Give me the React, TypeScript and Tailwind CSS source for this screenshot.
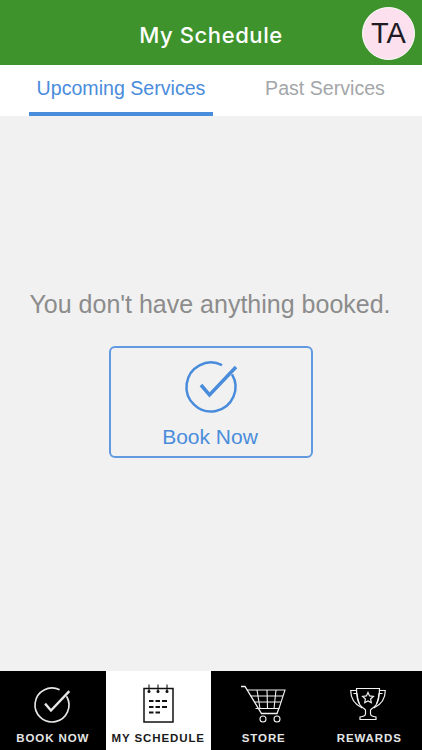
import React from 'react';

const CheckCircle = ({ className = '', size = 52, strokeWidth = 2.5 }: { className?: string; size?: number; strokeWidth?: number }) => (
  <svg width={size} height={size} viewBox="0 0 52 52" fill="none" stroke="currentColor" strokeWidth={strokeWidth} className={`block overflow-visible ${className}`}>
    <path d="M37 4.100A24.500 24.500 0 1 0 47 13.400" />
    <path d="M16 24l8.500 10L51 6" strokeWidth={strokeWidth + 1} />
  </svg>
);

const CalendarIcon = () => (
  <svg width="31" height="39" viewBox="0 0 31 39" fill="none" stroke="#111" className="block mt-[13px]">
    <rect x="1" y="4.500" width="29" height="33.500" strokeWidth="1.500" />
    <path d="M6 0.500v7M15 0.500v7M24 0.500v7" strokeWidth="1.100" />
    <circle cx="6" cy="7.500" r="1.500" fill="#111" stroke="none" />
    <circle cx="15" cy="7.500" r="1.500" fill="#111" stroke="none" />
    <circle cx="24" cy="7.500" r="1.500" fill="#111" stroke="none" />
    <path d="M6 17h4.500M12.500 17h4.500M19 17h5M6 23h4.500M12.500 23h4.500M19 23h5M6 28.500h4.500M12.500 28.500h4.500" strokeWidth="1.800" />
  </svg>
);

const CartIcon = () => (
  <svg width="45" height="38" viewBox="0 0 45 38" fill="none" stroke="#f2f2f2" strokeWidth="1.100" className="block mt-[14px]">
    <path d="M0 1.500h4L20.500 28.500H36l2-5.500" strokeWidth="1.300" />
    <path d="M6 5H44L38 23.500H14.500" />
    <path d="M9.500 11H42M13 17h27" />
    <path d="M16 5l3 18.500M26 5l.5 18.500M35 5l-2 18.500" />
    <circle cx="22" cy="34" r="3" />
    <circle cx="36" cy="34" r="3" />
  </svg>
);

const TrophyIcon = () => (
  <svg width="36" height="34" viewBox="0 0 36 34" fill="none" stroke="#f2f2f2" strokeWidth="1.200" className="block mt-[16px] mr-[2px]">
    <path d="M6.500 1.500h23c0 8-1 13-3.500 16.500-2 2.800-4.500 3.500-5.500 5v4c0 1.500 2.500 2.500 5.500 3v2.500H10V30c3-.5 5.500-1.500 5.500-3v-4c-1-1.500-3.500-2.200-5.500-5C7.500 14.500 6.500 9.500 6.500 1.500z" />
    <path d="M6.500 3.500H.7c0 7.500 4 14 11.500 17.500M29.500 3.500h5.800c0 7.500-4 14-11.500 17.500" />
    <path d="M3.500 6.500h3.500c.3 4 1.200 7.500 2.500 10.500M32.500 6.500H29c-.3 4-1.200 7.500-2.500 10.500" />
    <path d="M18 5.500l1.600 3.400 3.800.5-2.800 2.600.7 3.700-3.300-1.800-3.300 1.800.7-3.700-2.800-2.600 3.800-.5z" />
  </svg>
);

const NavItem = ({ label, icon, active = false }: { label: string; icon: React.ReactNode; active?: boolean }) => (
  <div className={`flex flex-col items-center w-[105.500px] h-full ${active ? 'bg-white text-[#1a1a1a]' : 'bg-black text-[#e6e6e6]'}`}>
    <div className="h-[54px] flex items-start justify-center">{icon}</div>
    <span className="mt-[6px] text-[11.500px] leading-[14px] font-bold tracking-[0.9px] whitespace-nowrap">{label}</span>
  </div>
);

export default function App() {
  return (
    <div className="w-[422px] h-[750px] flex flex-col overflow-hidden bg-[#f1f1f1] font-['Liberation_Sans',sans-serif]">
      {/* Header */}
      <div className="relative h-[65px] shrink-0 bg-[#3e932c] flex items-center justify-center pt-[6px]">
        <span className="font-['Inter',sans-serif] font-medium text-[22px] tracking-[0.600px] text-white">My Schedule</span>
        <div className="absolute left-[362px] top-[7px] w-[53px] h-[53px] rounded-full bg-[#fde0ee] border border-white flex items-center justify-center text-[29px] text-[#201a24]">
          TA
        </div>
      </div>

      {/* Tabs */}
      <div className="h-[51px] shrink-0 bg-white flex">
        <div className="ml-[29px] w-[184px] flex items-center justify-center border-b-4 border-[#4a8cdc] text-[#4a8cdc] text-[19.600px]">
          Upcoming Services
        </div>
        <div className="ml-[24px] w-[176px] flex items-center justify-center border-b-4 border-transparent text-[#a3a6a9] text-[19.600px]">
          Past Services
        </div>
      </div>

      {/* Empty state */}
      <div className="flex-1 flex flex-col items-center pt-[173px]">
        <p className="mr-[2px] text-[25px] leading-[30px] text-[#8c8c8c] whitespace-nowrap">You don't have anything booked.</p>
        <div className="mt-[27px] w-[204px] h-[112px] rounded-[6px] border-2 border-[#619ae0] flex flex-col items-center text-[#4a8cdc]">
          <CheckCircle className="mt-[13px]" />
          <span className="mt-[11px] mr-[2px] text-[21px] leading-[26px]">Book Now</span>
        </div>
      </div>

      {/* Bottom nav */}
      <div className="h-[79px] shrink-0 bg-black flex">
        <NavItem label="BOOK NOW" icon={<CheckCircle className="mt-[16px] mr-[2px]" size={36} strokeWidth={2.400} />} />
        <NavItem label="MY SCHEDULE" icon={<CalendarIcon />} active />
        <NavItem label="STORE" icon={<CartIcon />} />
        <NavItem label="REWARDS" icon={<TrophyIcon />} />
      </div>
    </div>
  );
}
